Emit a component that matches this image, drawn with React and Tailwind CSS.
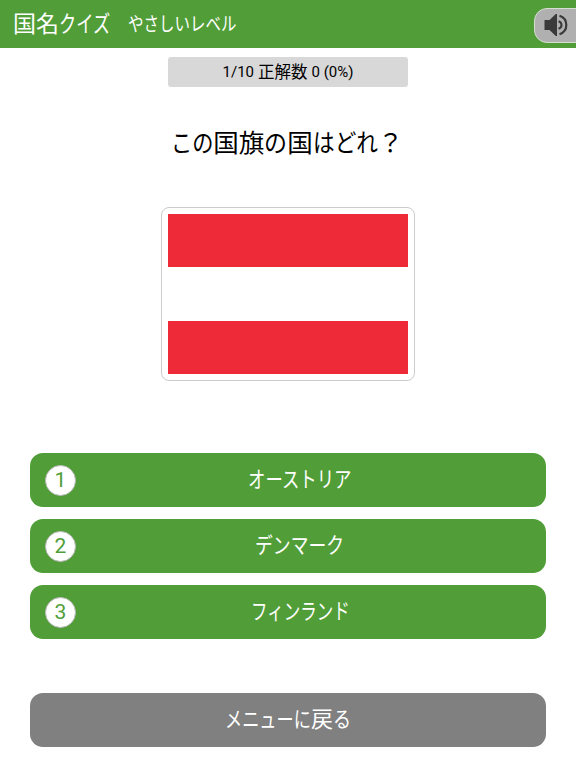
const font = "font-['Roboto','Noto_Sans_CJK_JP',sans-serif]"

const choices = [
  { name: 'オーストリア', ratio: 0.79 },
  { name: 'デンマーク', ratio: 0.81 },
  { name: 'フィンランド', ratio: 0.75 },
]

// Condensed kana; the margin gives back the width lost by scaling
function Kana({ children, ratio = 0.8 }) {
  return (
    <span
      className="inline-block whitespace-nowrap origin-left"
      style={{
        transform: `scaleX(${ratio})`,
        marginRight: `${(ratio - 1) * children.length}em`,
      }}
    >
      {children}
    </span>
  )
}

function SpeakerButton() {
  return (
    <button className="w-12 h-[35px] mt-[2px] shrink-0 -mr-[6px] pl-[9px] rounded-l-[13px] border-[1.5px] border-[#d4dfd0] bg-[#b0b0b0] flex items-center" aria-label="sound">
      <svg width="25" height="24" viewBox="0 0 25 24" fill="none">
        <path d="M0.5 7h5l6.3-6H13v22h-1.2l-6.3-6h-5z" fill="#3a3a3a" />
        <path d="M14.5 8.2q3 .9 3 3.8t-3 3.8" stroke="#3a3a3a" strokeWidth="2.1" />
        <path d="M15.5 2.8q6.8 2.2 6.8 9.2t-6.8 9.2" stroke="#3a3a3a" strokeWidth="2.2" />
      </svg>
    </button>
  )
}

export default function App() {
  return (
    <div className={`w-[576px] h-[768px] bg-white flex flex-col overflow-hidden ${font}`}>
      <header className="h-12 shrink-0 bg-[#519e38] text-white flex items-center pl-[13px]">
        <h1 className="text-[23px] pt-0.5">国名<Kana ratio={0.75}>クイズ</Kana></h1>
        <span className="ml-[18px] pt-0.5 text-[19px] grow"><Kana ratio={0.815}>やさしいレベル</Kana></span>
        <SpeakerButton />
      </header>

      <div className="mt-[9px] w-60 h-[30px] mx-auto shrink-0 rounded-[3px] bg-[#d8d8d8] text-[15px] flex items-center justify-center gap-1">
        <span className="pt-px">1/10</span>
        <span className="text-[16.5px] pt-0.5">正解数</span>
        <span className="pt-px">0 (0%)</span>
      </div>
      <h2 className="mt-9 pr-0.5 h-10 text-[25.5px] leading-10 text-center shrink-0">
        <Kana ratio={0.83}>この</Kana>国旗<Kana ratio={0.9}>の</Kana>国<Kana ratio={0.85}>はどれ</Kana>？
      </h2>

      {/* Flag */}
      <div className="mt-11 w-[254px] h-[174px] mx-auto shrink-0 p-1.5 border border-[#cccccc] rounded-lg flex flex-col">
        <div className="grow basis-0 bg-[#ee2a39]" />
        <div className="grow basis-0 bg-white" />
        <div className="grow basis-0 bg-[#ee2a39]" />
      </div>

      {/* Answers */}
      <div className="mt-[72px] px-[30px] flex flex-col gap-3">
        {choices.map(({ name, ratio }, i) => (
          <button key={name} className="h-[54px] px-[15px] rounded-[13px] bg-[#519e38] text-white text-[22px] flex items-center">
            <span className="size-[31px] pt-0.5 rounded-full bg-white border border-[#b9b9b9] text-[#519e38] text-[21px] flex items-center justify-center">
              {i + 1}
            </span>
            <span className="grow pr-[7px] pb-px"><Kana ratio={ratio}>{name}</Kana></span>
          </button>
        ))}
      </div>
      <button className="mt-[54px] mx-[30px] h-[54px] pb-px shrink-0 rounded-[13px] bg-[#808080] text-white text-[22px]">
        <Kana ratio={0.78}>メニューに</Kana>戻<Kana ratio={0.82}>る</Kana>
      </button>
    </div>
  )
}
